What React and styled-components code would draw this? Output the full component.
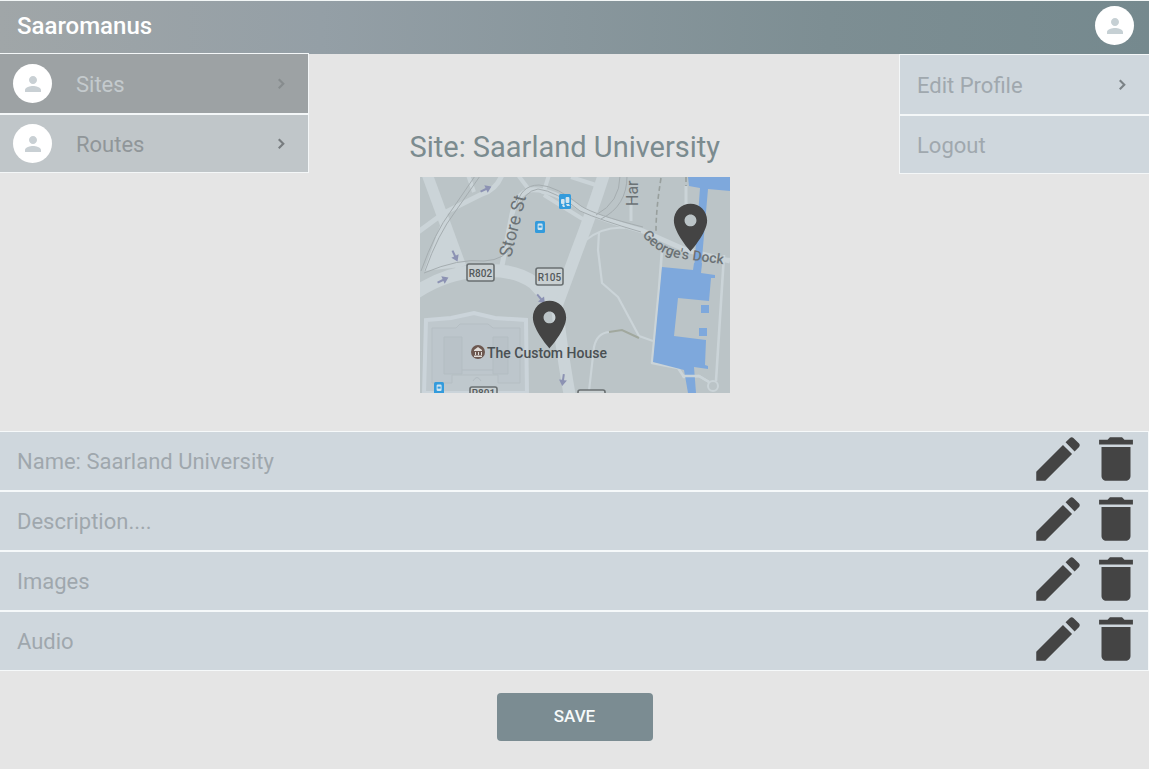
import React from 'react';
import styled, { createGlobalStyle } from 'styled-components';

const GlobalStyle = createGlobalStyle`
  *, *::before, *::after { box-sizing: border-box; }
  body {
    margin: 0;
    background: #e5e5e5;
    font-family: Roboto, "Liberation Sans", sans-serif;
  }
`;

const Header = styled.header`
  display: flex;
  align-items: center;
  justify-content: space-between;
  height: 54px;
  padding: 0 15px 4px 17px;
  border-top: 1px solid #f2f6f6;
  background: linear-gradient(90deg, #a0a6a8 0%, #949fa6 28%, #7d8e93 72%, #75898e 100%);
`;

const Brand = styled.h1`
  margin: 0;
  font-size: 24px;
  line-height: 28px;
  font-weight: 500;
  color: #fff;
`;

const AvatarDisc = styled.span`
  display: flex;
  align-items: center;
  justify-content: center;
  flex: none;
  width: 39px;
  height: 39px;
  border-radius: 50%;
  background: #fff;
  color: ${(p) => p.$tone || '#c6d0d4'};
`;

const AvatarButton = styled.button`
  padding: 0;
  border: 0;
  border-radius: 50%;
  background: none;
  cursor: pointer;
`;

const Stage = styled.div`
  display: grid;
  grid-template-columns: 1fr auto 1fr;
  align-items: start;
`;

const Menu = styled.nav`
  display: flex;
  flex-direction: column;
  width: 100%;
  max-width: ${(p) => p.$width}px;
  justify-self: ${(p) => (p.$end ? 'end' : 'start')};
  margin-top: ${(p) => (p.$end ? 0 : -1)}px;
  border: solid #f4f7f8;
  border-width: ${(p) => (p.$end ? '1px 0 1px 1px' : '1px 1px 1px 0')};
`;

const tones = {
  active: { bg: '#9da2a4', text: '#c4cacd', arrow: '#878c8e' },
  muted: { bg: '#c0c6c9', text: '#909699', arrow: '#777c7f' },
  plain: { bg: '#cfd7dd', text: '#a0a8ae', arrow: '#7b8286' },
};

const MenuItem = styled.a`
  display: flex;
  align-items: center;
  height: 59px;
  padding: 0 14px 0 ${(p) => (p.$icon ? 13 : 17)}px;
  background: ${(p) => tones[p.$tone].bg};
  color: ${(p) => tones[p.$tone].text};
  font-size: 22px;
  line-height: 28px;
  text-decoration: none;

  & + & { border-top: 2px solid #f4f7f8; }
`;

const MenuLabel = styled.span`
  flex: 1;
  padding-top: 2px;
  margin-left: ${(p) => (p.$icon ? 24 : 0)}px;
`;

const Arrow = styled.svg`
  width: 24px;
  height: 24px;
  fill: ${(p) => tones[p.$tone].arrow};
`;

const Site = styled.section`
  width: 330px;
  padding-top: 74px;
`;

const SiteTitle = styled.h2`
  margin: 0 0 11px;
  font-size: 29px;
  line-height: 38px;
  font-weight: 400;
  white-space: nowrap;
  color: #7b8b8f;
`;

const MapImage = styled.svg`
  display: block;
  width: 310px;
  height: 216px;
  margin: 0 auto;
  font-family: Roboto, "Liberation Sans", sans-serif;
`;

const Details = styled.ul`
  margin: 38px 0 0;
  padding: 0;
  list-style: none;
`;

const DetailRow = styled.li`
  display: flex;
  height: 60px;
  padding: 0 3px 0 17px;
  border: solid #f6f9fa;
  border-width: 1px 1px 1px 0;
  background: #cfd7dd;
`;

const DetailText = styled.span`
  flex: 1;
  align-self: center;
  padding-top: 2px;
  font-size: 22px;
  line-height: 28px;
  color: #9fa7ad;
`;

const IconButton = styled.button`
  display: flex;
  align-items: center;
  justify-content: center;
  width: 58px;
  height: 54px;
  padding: 0;
  border: 0;
  background: none;
  color: #444;
  cursor: pointer;

  svg { flex: none; width: 58px; height: 58px; fill: currentColor; }
`;

const Actions = styled.div`
  display: flex;
  justify-content: center;
  padding: 22px 0 28px;
`;

const SaveButton = styled.button`
  width: 156px;
  height: 48px;
  padding: 0 0 2px;
  border: 0;
  border-radius: 4px;
  background: #7b8c92;
  color: #f6fafa;
  font: 500 17px/24px Roboto, "Liberation Sans", sans-serif;
  cursor: pointer;
`;

const PIN = 'M12 2C8.13 2 5 5.13 5 9c0 5.25 7 13 7 13s7-7.75 7-13c0-3.87-3.13-7-7-7zm0 9.5c-1.38 0-2.5-1.12-2.5-2.5s1.12-2.5 2.5-2.5 2.5 1.12 2.5 2.5-1.12 2.5-2.5 2.5z';

function Avatar({ tone }) {
  return (
    <AvatarDisc $tone={tone}>
      <svg width="24" height="24" viewBox="0 0 24 24" fill="currentColor" aria-hidden="true">
        <path d="M12 12c2.21 0 4-1.79 4-4s-1.79-4-4-4-4 1.79-4 4 1.79 4 4 4zm0 2c-2.67 0-8 1.34-8 4v2h16v-2c0-2.66-5.33-4-8-4z" />
      </svg>
    </AvatarDisc>
  );
}

function Chevron({ tone }) {
  return (
    <Arrow $tone={tone} viewBox="0 0 24 24" aria-hidden="true">
      <path d="M9.5 6.500 8 8l3.800 3.800L8 15.600l1.500 1.500 5.300-5.300z" />
    </Arrow>
  );
}

function Item({ label, tone = 'plain', icon, arrow }) {
  return (
    <MenuItem href="#" $tone={tone} $icon={icon}>
      {icon && <Avatar tone={icon} />}
      <MenuLabel $icon={icon}>{label}</MenuLabel>
      {arrow && <Chevron tone={tone} />}
    </MenuItem>
  );
}

function Pin({ x, y }) {
  return (
    <svg x={x} y={y} width="57" height="57" viewBox="0 0 24 24" fill="#444">
      <path d={PIN} />
    </svg>
  );
}

function RoadSign({ x, y, label, baseline = 13 }) {
  return (
    <g>
      <rect x={x} y={y} width="27" height="17" rx="2" fill="#c9d0d2" stroke="#696f71" strokeWidth="1.6" />
      {label && (
        <text x={x + 13.5} y={y + baseline} textAnchor="middle" fontSize="10" fontWeight="500" fill="#53595b">{label}</text>
      )}
    </g>
  );
}

function TransitStop({ x, y, w, h, double }) {
  return (
    <g transform={`translate(${x} ${y})`}>
      <rect width={w} height={h} rx="1.5" fill="#339bdc" />
      {double ? (
        <g fill="#d2e5f0">
          <rect x="2" y="5" width="3.6" height="5" rx="1" />
          <rect x="6.600" y="3" width="3.800" height="6" rx="1" />
          <path d="M3 11l2-1 1 3H4zM7 10h3l1 2H8z" />
        </g>
      ) : (
        <g>
          <rect x="2.600" y="2.500" width="5" height="6.500" rx="1.200" fill="#d2e5f0" />
          <rect x="3.600" y="4.600" width="3" height="2" fill="#339bdc" />
        </g>
      )}
    </g>
  );
}

function Direction({ x, y, angle }) {
  return (
    <path
      transform={`translate(${x} ${y}) rotate(${angle})`}
      d="M-6-1H0V-4L6 0 0 4V1H-6Z"
      fill="#8c92b3"
    />
  );
}

function SiteMap() {
  return (
    <MapImage viewBox="0 0 310 216" role="img" aria-label="Map of the site">
      <rect width="310" height="216" fill="#bbc4c7" />

      <path d="M4 216 6 143 31 141 54 136 75 141 106 143 107 216Z" fill="#bfc8cd" stroke="#cbd4da" strokeWidth="4" />
      <path d="M12 206V151H36L40 147H68L73 151H100V206H78V198H32V206Z" fill="#bdc6cc" stroke="#b5bec3" />
      <path d="M24 160H42V197H24ZM73 160H88V197H73Z" fill="#b9c2c8" stroke="#b3bdc2" />
      <path d="M42 193H73M53 204Q57 197 61 204" fill="none" stroke="#b2bbc1" />

      <g fill="none" stroke="#cbd4d8" strokeLinejoin="round">
        <path d="M7-3 41 90" strokeWidth="11" />
        <path d="M-2 55 24 36 62 17Q76 13 82-2" strokeWidth="5" />
        <path d="M48-2 54 15M98-2 110 14M129-2 123 17M151 0 176 8" strokeWidth="4" />
        <path d="M81 94 92 37Q97 16 110 13 130 11 161 32 180 42 223 54L266 73 310 84" strokeWidth="5" />
        <path d="M124 18 161 41 171 46" strokeWidth="4" />
        <path d="M184-3Q173 32 155 79L137 128Q140 163 150 220" strokeWidth="12" />
        <path d="M-5 116Q25 96 58 94 94 91 114 106L136 130" strokeWidth="13" />
        <path d="M129 92 131 118M211 24V44M266 9V28" strokeWidth="3" />
        <path d="M166 63Q184 49 205 51M179 55 178 73 182 106 198 120 219 159 233 164M189 155Q177 156 174 170L169 214" strokeWidth="2.2" />
        <path d="M242 73 239 112 232 186 258 191 264 200 279 199 289 205M304 78 296 204M304 82H311" strokeWidth="2.6" />
        <circle cx="293" cy="209" r="5" strokeWidth="2" />
      </g>
      <path d="M22 43 41 90 4 94ZM156 78 134 127 114 104 149 91Z" fill="#cbd4d8" />
      <path d="M142 171 155 216H146Z" fill="#cbd4d8" />

      <g fill="none" stroke="#a5adb0" strokeWidth="1">
        <path d="M1 94Q15 55 31 34L55-1M5 94Q18 57 35 35L60-1" />
        <path d="M4 96Q39 81 64 84 86 83 92 67" />
        <path d="M96 31Q100 8 119 8 137 9 161 29 175 38 223 50M99 33Q104 14 118 12 136 14 160 34 180 43 221 55" />
        <path d="M200-1Q200 25 176 38M207-1Q207 29 181 42" />
      </g>
      <path d="M189 155 202 153 219 161" fill="none" stroke="#a1a89e" strokeWidth="2" />
      <path d="M241 1Q236 32 236 54M266 0V9" fill="none" stroke="#989f9d" strokeWidth="1.6" strokeDasharray="5 3" />

      <g fill="#7ea8dc">
        <path d="M268 0H310V14L288 12 281 93H274L280 11 269 9Z" />
        <path d="M242 90 273 93 274 86H282L281 96 295 98V101H291L289 124 258 121 254 159 286 163 285 188 288 189V192L274 190 276 216H268L264 193 233 185Z" />
        <path d="M281 128H289V136H281ZM279 151H287V159H279Z" />
      </g>
      <path d="M262 199 279 199 289 205" fill="none" stroke="#cbd4d8" strokeWidth="2.6" />

      <Direction x={66} y={12} angle={-25} />
      <Direction x={35} y={79} angle={65} />
      <Direction x={23} y={103} angle={-25} />
      <Direction x={121} y={122} angle={50} />
      <Direction x={143} y={203} angle={98} />

      <RoadSign x={47} y={87} label="R802" />
      <RoadSign x={116} y={91} label="R105" />
      <RoadSign x={50} y={210} label="R801" baseline={10} />
      <RoadSign x={158} y={213} />

      <TransitStop x={139} y={17} w={12} h={15} double />
      <TransitStop x={115} y={44} w={10} h={12} />
      <TransitStop x={14} y={205} w={10} h={12} />

      <g fill="#6b7275">
        <text transform="translate(91 81) rotate(-76)" fontSize="18">Store St</text>
        <text transform="translate(218 29) rotate(-90)" fontSize="16">Har</text>
        <path id="dock-line" d="M222 58Q238 79 264 82L310 88" fill="none" />
        <text fontSize="14" fontWeight="500"><textPath href="#dock-line">George's Dock</textPath></text>
      </g>

      <circle cx="58" cy="175" r="7" fill="#6d5850" />
      <path d="M54 173 58 170 62 173V174H54ZM55 175H56V178H55ZM58 175H59V178H58ZM61 175H62V178H61ZM54 178.500H62V180H54Z" fill="#e0dcd8" />
      <text x="67" y="181" fontSize="14" fontWeight="500" fill="#4a5053">The Custom House</text>

      <Pin x={242} y={22} />
      <Pin x={101} y={119} />
    </MapImage>
  );
}

const details = ['Name: Saarland University', 'Description....', 'Images', 'Audio'];

export default function App() {
  return (
    <>
      <GlobalStyle />
      <Header>
        <Brand>Saaromanus</Brand>
        <AvatarButton type="button" aria-label="Account">
          <Avatar />
        </AvatarButton>
      </Header>
      <main>
        <Stage>
          <Menu $width={309} aria-label="Main">
            <Item label="Sites" tone="active" icon="#c9d0d4" arrow />
            <Item label="Routes" tone="muted" icon="#c9d0d4" arrow />
          </Menu>
          <Site>
            <SiteTitle>Site: Saarland University</SiteTitle>
            <SiteMap />
          </Site>
          <Menu $width={250} $end aria-label="Account">
            <Item label="Edit Profile" arrow />
            <Item label="Logout" />
          </Menu>
        </Stage>
        <Details>
          {details.map((text) => (
            <DetailRow key={text}>
              <DetailText>{text}</DetailText>
              <IconButton type="button" aria-label={`Edit ${text}`}>
                <svg viewBox="0 0 24 24">
                  <path d="M3 17.250V21h3.750L17.810 9.940l-3.750-3.750L3 17.250zM20.710 7.040c.390-.390.390-1.020 0-1.410l-2.340-2.340c-.390-.390-1.020-.390-1.410 0l-1.830 1.830 3.750 3.750 1.830-1.830z" />
                </svg>
              </IconButton>
              <IconButton type="button" aria-label={`Delete ${text}`}>
                <svg viewBox="0 0 24 24">
                  <path d="M6 19c0 1.100.900 2 2 2h8c1.100 0 2-.900 2-2V7H6v12zM19 4h-3.500l-1-1h-5l-1 1H5v2h14V4z" />
                </svg>
              </IconButton>
            </DetailRow>
          ))}
        </Details>
        <Actions>
          <SaveButton type="button">SAVE</SaveButton>
        </Actions>
      </main>
    </>
  );
}
